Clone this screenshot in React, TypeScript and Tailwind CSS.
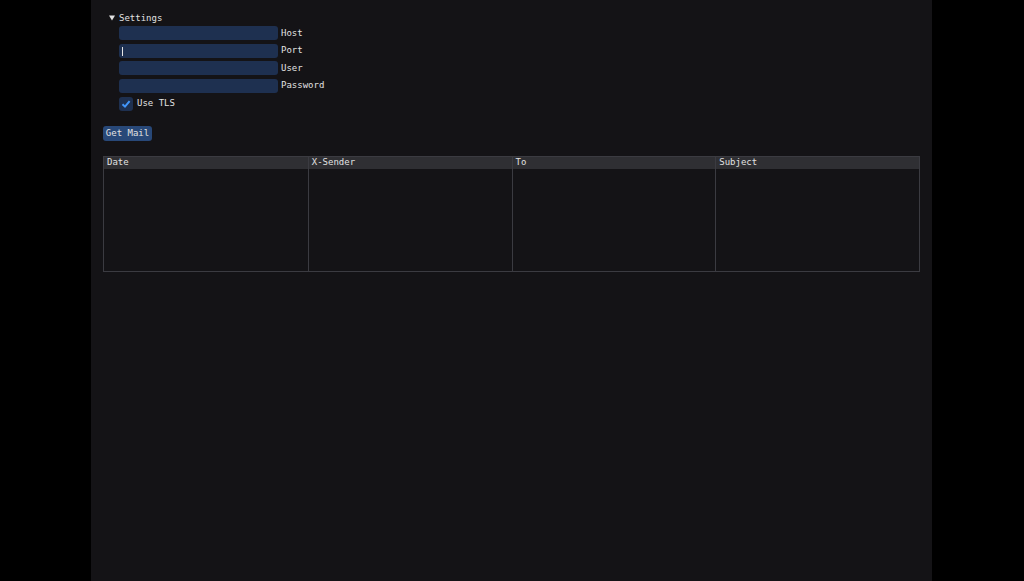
import React from "react";

const font = { fontFamily: '"DejaVu Sans Mono", "Liberation Mono", monospace' };

function Field({ label, cursor }: { label: string; cursor?: boolean }) {
  return (
    <div className="flex items-center h-[14px]">
      <div className="relative w-[159px] h-[14px] rounded-[3px] bg-[#1e3050]">
        {cursor && <div className="absolute left-[3px] top-[3px] w-px h-[9px] bg-[#e6e6e6]" />}
      </div>
      <span className="ml-[3px] text-[9px] leading-none text-[#e2e2e2]">{label}</span>
    </div>
  );
}

export default function App() {
  const cols = ["Date", "X-Sender", "To", "Subject"];
  return (
    <div className="w-[1024px] h-[581px] bg-black flex" style={font}>
      <div className="ml-[91px] w-[841px] h-[581px] bg-[#141316] pl-[12px] pt-[11px] flex flex-col">
        <div className="flex items-center h-[14px]">
          <svg width="6" height="6" viewBox="0 0 6 6" className="ml-[6px]">
            <polygon points="0,0.5 6,0.5 3,5.5" fill="#e2e2e2" />
          </svg>
          <span className="ml-[4px] text-[9px] leading-none text-[#e2e2e2]">Settings</span>
        </div>
        <div className="ml-[16px] mt-[1px] flex flex-col gap-[3.5px]">
          <Field label="Host" />
          <Field label="Port" cursor />
          <Field label="User" />
          <Field label="Password" />
          <div className="flex items-center h-[14px] mt-[0.5px]">
            <div className="w-[14px] h-[14px] rounded-[3px] bg-[#1e3050] flex items-center justify-center">
              <svg width="10" height="10" viewBox="0 0 10 10">
                <polyline points="1.5,5.2 4,7.6 8.6,2.2" fill="none" stroke="#4296fa" strokeWidth="2" />
              </svg>
            </div>
            <span className="ml-[4px] text-[9px] leading-none text-[#e2e2e2]">Use TLS</span>
          </div>
        </div>
        <div className="mt-[15px]">
          <button className="h-[15px] w-[49px] rounded-[3px] bg-[#284878] text-[9px] leading-none text-[#e2e2e2] flex items-center justify-center">
            Get Mail
          </button>
        </div>
        <div className="mt-[15px] w-[817px] h-[116px] border border-[#3b3b41] flex flex-col">
          <div className="h-[12px] bg-[#2f2f33] grid grid-cols-4">
            {cols.map((c, i) => (
              <div key={c} className={`flex items-center pl-[3px] text-[9px] leading-none text-[#e2e2e2] ${i > 0 ? "border-l border-[#3b3b41]" : ""}`}>
                {c}
              </div>
            ))}
          </div>
          <div className="flex-1 grid grid-cols-4">
            {cols.map((c, i) => (
              <div key={c} className={i > 0 ? "border-l border-[#3b3b41]" : ""} />
            ))}
          </div>
        </div>
      </div>
    </div>
  );
}
